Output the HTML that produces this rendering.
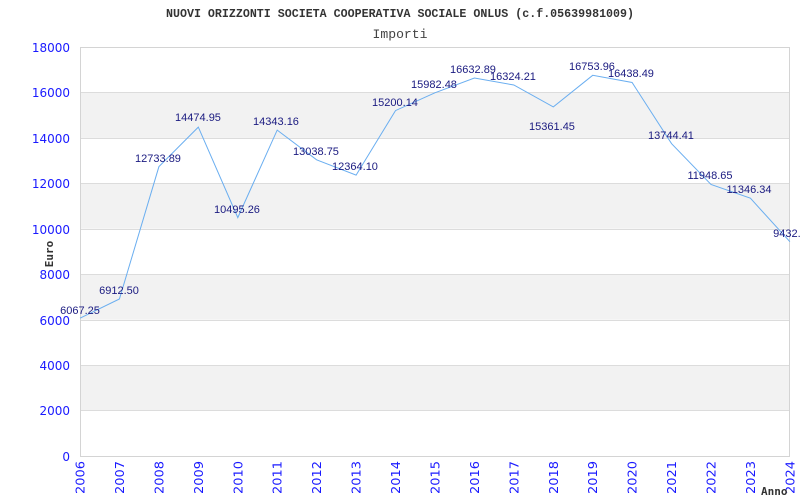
<!DOCTYPE html>
<html><head><meta charset="utf-8"><style>
html,body{margin:0;padding:0;background:#fff;width:800px;height:500px;overflow:hidden}
svg{display:block}
</style></head><body>
<svg width="800" height="500" xmlns="http://www.w3.org/2000/svg">
<rect width="800" height="500" fill="#fff"/>
<g fill="#f2f2f2">
<rect x="80" y="92.4" width="710" height="45.5"/>
<rect x="80" y="183.3" width="710" height="45.4"/>
<rect x="80" y="274.2" width="710" height="45.5"/>
<rect x="80" y="365.1" width="710" height="45.5"/>
</g>
<g stroke="#dcdcdc" stroke-width="1">
<line x1="80" y1="92.5" x2="790" y2="92.5"/>
<line x1="80" y1="138.5" x2="790" y2="138.5"/>
<line x1="80" y1="183.5" x2="790" y2="183.5"/>
<line x1="80" y1="229.5" x2="790" y2="229.5"/>
<line x1="80" y1="274.5" x2="790" y2="274.5"/>
<line x1="80" y1="320.5" x2="790" y2="320.5"/>
<line x1="80" y1="365.5" x2="790" y2="365.5"/>
<line x1="80" y1="410.5" x2="790" y2="410.5"/>
</g>
<rect x="80.5" y="47.5" width="709" height="409" fill="none" stroke="#d4d4d4" stroke-width="1"/>
<text x="400" y="17" text-anchor="middle" font-family="Liberation Mono, monospace" font-weight="bold" font-size="12" fill="#333" textLength="468" lengthAdjust="spacingAndGlyphs">NUOVI ORIZZONTI SOCIETA COOPERATIVA SOCIALE ONLUS (c.f.05639981009)</text>
<text x="400" y="38" text-anchor="middle" font-family="Liberation Mono, monospace" font-size="13" fill="#444" textLength="55" lengthAdjust="spacingAndGlyphs">Importi</text>
<g font-family="DejaVu Sans, sans-serif" font-size="12" fill="#1a1aff" text-anchor="end">
<text x="70" y="52">18000</text>
<text x="70" y="97">16000</text>
<text x="70" y="143">14000</text>
<text x="70" y="188">12000</text>
<text x="70" y="234">10000</text>
<text x="70" y="279">8000</text>
<text x="70" y="325">6000</text>
<text x="70" y="370">4000</text>
<text x="70" y="415">2000</text>
<text x="70" y="461">0</text>
</g>
<text transform="translate(53,254) rotate(-90)" font-family="DejaVu Sans Mono, monospace" font-weight="bold" font-size="11" fill="#333" text-anchor="middle">Euro</text>
<g font-family="DejaVu Sans, sans-serif" font-size="12" fill="#1a1aff">
<text transform="translate(84.5,494) rotate(-90)" textLength="33" lengthAdjust="spacingAndGlyphs">2006</text>
<text transform="translate(123.9,494) rotate(-90)" textLength="33" lengthAdjust="spacingAndGlyphs">2007</text>
<text transform="translate(163.4,494) rotate(-90)" textLength="33" lengthAdjust="spacingAndGlyphs">2008</text>
<text transform="translate(202.8,494) rotate(-90)" textLength="33" lengthAdjust="spacingAndGlyphs">2009</text>
<text transform="translate(242.3,494) rotate(-90)" textLength="33" lengthAdjust="spacingAndGlyphs">2010</text>
<text transform="translate(281.7,494) rotate(-90)" textLength="33" lengthAdjust="spacingAndGlyphs">2011</text>
<text transform="translate(321.1,494) rotate(-90)" textLength="33" lengthAdjust="spacingAndGlyphs">2012</text>
<text transform="translate(360.6,494) rotate(-90)" textLength="33" lengthAdjust="spacingAndGlyphs">2013</text>
<text transform="translate(400,494) rotate(-90)" textLength="33" lengthAdjust="spacingAndGlyphs">2014</text>
<text transform="translate(439.4,494) rotate(-90)" textLength="33" lengthAdjust="spacingAndGlyphs">2015</text>
<text transform="translate(478.9,494) rotate(-90)" textLength="33" lengthAdjust="spacingAndGlyphs">2016</text>
<text transform="translate(518.3,494) rotate(-90)" textLength="33" lengthAdjust="spacingAndGlyphs">2017</text>
<text transform="translate(557.8,494) rotate(-90)" textLength="33" lengthAdjust="spacingAndGlyphs">2018</text>
<text transform="translate(597.2,494) rotate(-90)" textLength="33" lengthAdjust="spacingAndGlyphs">2019</text>
<text transform="translate(636.6,494) rotate(-90)" textLength="33" lengthAdjust="spacingAndGlyphs">2020</text>
<text transform="translate(676.1,494) rotate(-90)" textLength="33" lengthAdjust="spacingAndGlyphs">2021</text>
<text transform="translate(715.5,494) rotate(-90)" textLength="33" lengthAdjust="spacingAndGlyphs">2022</text>
<text transform="translate(754.9,494) rotate(-90)" textLength="33" lengthAdjust="spacingAndGlyphs">2023</text>
<text transform="translate(794.4,494) rotate(-90)" textLength="33" lengthAdjust="spacingAndGlyphs">2024</text>
</g>
<text x="761" y="495" font-family="DejaVu Sans Mono, monospace" font-weight="bold" font-size="11" fill="#333">Anno</text>
<polyline fill="none" stroke="#6aaef0" stroke-width="1" points="80,318.2 119.4,299 158.9,166.7 198.3,127.1 237.8,217.6 277.2,130.1 316.6,159.8 356.1,175.1 395.5,110.6 434.9,92.8 474.4,78 513.8,85 553.3,106.9 592.7,75.3 632.1,82.5 671.6,143.7 711,184.5 750.4,198.2 789.9,241.7"/>
<g font-family="Liberation Sans, sans-serif" font-size="11" fill="#1a1a80" text-anchor="middle">
<text x="80" y="314">6067.25</text>
<text x="119" y="294">6912.50</text>
<text x="158" y="162">12733.89</text>
<text x="198" y="121">14474.95</text>
<text x="237" y="213">10495.26</text>
<text x="276" y="125">14343.16</text>
<text x="316" y="155">13038.75</text>
<text x="355" y="170">12364.10</text>
<text x="395" y="106">15200.14</text>
<text x="434" y="88">15982.48</text>
<text x="473" y="73">16632.89</text>
<text x="513" y="80">16324.21</text>
<text x="552" y="130">15361.45</text>
<text x="592" y="70">16753.96</text>
<text x="631" y="77">16438.49</text>
<text x="671" y="139">13744.41</text>
<text x="710" y="179">11948.65</text>
<text x="749" y="193">11346.34</text>
<text x="790" y="237">9432.8</text>
</g>
</svg>
</body></html>
